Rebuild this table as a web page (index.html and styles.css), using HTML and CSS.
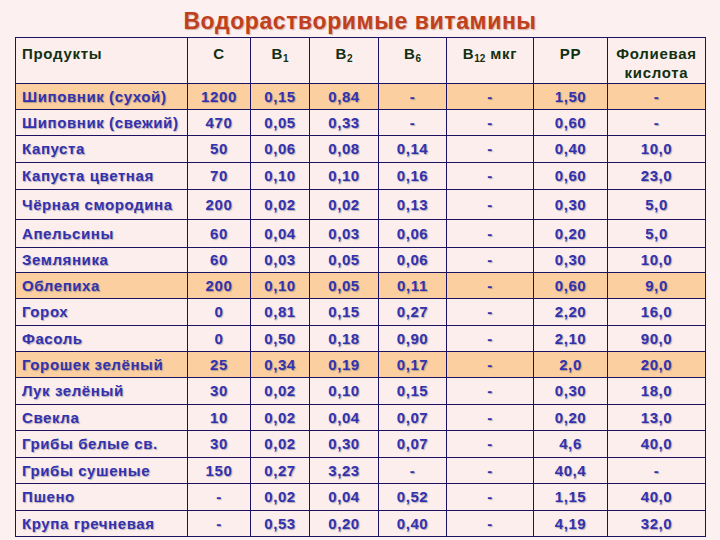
FILE: index.html
```html
<!DOCTYPE html>
<html lang="ru">
<head>
<meta charset="utf-8">
<link rel="stylesheet" href="styles.css">
</head>
<body>
<div class="page">
  <h1 class="title">Водорастворимые витамины</h1>
  <table class="vit">
    <colgroup>
      <col class="c0"><col class="c1"><col class="c2"><col class="c3"><col class="c4"><col class="c5"><col class="c6"><col class="c7">
    </colgroup>
    <thead>
      <tr class="head">
        <th class="name">Продукты</th>
        <th>С</th>
        <th>В<sub>1</sub></th>
        <th>В<sub>2</sub></th>
        <th>В<sub>6</sub></th>
        <th>В<sub>12</sub> мкг</th>
        <th>РР</th>
        <th>Фолиевая кислота</th>
      </tr>
    </thead>
    <tbody>
      <tr class="hl"><td class="name">Шиповник (сухой)</td><td>1200</td><td>0,15</td><td>0,84</td><td>-</td><td>-</td><td>1,50</td><td>-</td></tr>
      <tr><td class="name">Шиповник (свежий)</td><td>470</td><td>0,05</td><td>0,33</td><td>-</td><td>-</td><td>0,60</td><td>-</td></tr>
      <tr class="r27"><td class="name">Капуста</td><td>50</td><td>0,06</td><td>0,08</td><td>0,14</td><td>-</td><td>0,40</td><td>10,0</td></tr>
      <tr class="r27"><td class="name">Капуста цветная</td><td>70</td><td>0,10</td><td>0,10</td><td>0,16</td><td>-</td><td>0,60</td><td>23,0</td></tr>
      <tr class="r30"><td class="name">Чёрная смородина</td><td>200</td><td>0,02</td><td>0,02</td><td>0,13</td><td>-</td><td>0,30</td><td>5,0</td></tr>
      <tr class="r28"><td class="name">Апельсины</td><td>60</td><td>0,04</td><td>0,03</td><td>0,06</td><td>-</td><td>0,20</td><td>5,0</td></tr>
      <tr class="r25"><td class="name">Земляника</td><td>60</td><td>0,03</td><td>0,05</td><td>0,06</td><td>-</td><td>0,30</td><td>10,0</td></tr>
      <tr class="hl"><td class="name">Облепиха</td><td>200</td><td>0,10</td><td>0,05</td><td>0,11</td><td>-</td><td>0,60</td><td>9,0</td></tr>
      <tr class="r27"><td class="name">Горох</td><td>0</td><td>0,81</td><td>0,15</td><td>0,27</td><td>-</td><td>2,20</td><td>16,0</td></tr>
      <tr><td class="name">Фасоль</td><td>0</td><td>0,50</td><td>0,18</td><td>0,90</td><td>-</td><td>2,10</td><td>90,0</td></tr>
      <tr class="hl"><td class="name">Горошек зелёный</td><td>25</td><td>0,34</td><td>0,19</td><td>0,17</td><td>-</td><td>2,0</td><td>20,0</td></tr>
      <tr class="r27"><td class="name">Лук зелёный</td><td>30</td><td>0,02</td><td>0,10</td><td>0,15</td><td>-</td><td>0,30</td><td>18,0</td></tr>
      <tr><td class="name">Свекла</td><td>10</td><td>0,02</td><td>0,04</td><td>0,07</td><td>-</td><td>0,20</td><td>13,0</td></tr>
      <tr class="r27"><td class="name">Грибы белые св.</td><td>30</td><td>0,02</td><td>0,30</td><td>0,07</td><td>-</td><td>4,6</td><td>40,0</td></tr>
      <tr><td class="name">Грибы сушеные</td><td>150</td><td>0,27</td><td>3,23</td><td>-</td><td>-</td><td>40,4</td><td>-</td></tr>
      <tr class="r27"><td class="name">Пшено</td><td>-</td><td>0,02</td><td>0,04</td><td>0,52</td><td>-</td><td>1,15</td><td>40,0</td></tr>
      <tr><td class="name">Крупа гречневая</td><td>-</td><td>0,53</td><td>0,20</td><td>0,40</td><td>-</td><td>4,19</td><td>32,0</td></tr>
    </tbody>
  </table>
</div>
</body>
</html>
```

FILE: styles.css
```css
html, body {
  margin: 0;
  padding: 0;
  background: #fdf0f0;
}
body {
  font-family: "Liberation Sans", Arial, sans-serif;
}
.page {
  width: 720px;
  height: 540px;
  padding: 7px 15px 0 15px;
  box-sizing: border-box;
  overflow: hidden;
}
.title {
  margin: 0;
  height: 30px;
  text-align: center;
  font-size: 23px;
  line-height: 28px;
  font-weight: bold;
  color: #c0401c;
  letter-spacing: 0.6px;
  text-shadow: 1px 1px 1px rgba(120, 60, 40, 0.35);
}
.vit {
  width: 690px;
  table-layout: fixed;
  border-collapse: collapse;
  background: #fdeeee;
}
.c0 { width: 172px; }
.c1 { width: 63px; }
.c2 { width: 59px; }
.c3 { width: 69px; }
.c4 { width: 68px; }
.c5 { width: 87px; }
.c6 { width: 74px; }
.c7 { width: 98px; }
.vit th, .vit td {
  border: 1px solid #1c1262;
  padding: 0 3px;
  font-size: 15px;
  font-weight: bold;
  text-align: center;
  white-space: nowrap;
}
.vit th {
  height: 46px;
  vertical-align: top;
  padding-top: 6px;
  line-height: 19px;
  color: #103010;
  letter-spacing: 0.7px;
  white-space: normal;
  box-sizing: border-box;
}
.vit th sub {
  font-size: 10px;
  vertical-align: -3px;
  line-height: 0;
  letter-spacing: 0;
}
.vit td {
  height: 26px;
  line-height: 16px;
  vertical-align: middle;
  color: #3232ae;
  text-shadow: 1px 1px 1px rgba(90, 90, 110, 0.45);
  letter-spacing: 0.6px;
  box-sizing: border-box;
}
.vit .name {
  text-align: left;
  padding-left: 6px;
}
.vit tr.r25 td { height: 25px; }
.vit tr.r27 td { height: 27px; }
.vit tr.r28 td { height: 28px; }
.vit tr.r30 td { height: 30px; }
.vit tr.hl td { background: #fbcf9f; }
```
